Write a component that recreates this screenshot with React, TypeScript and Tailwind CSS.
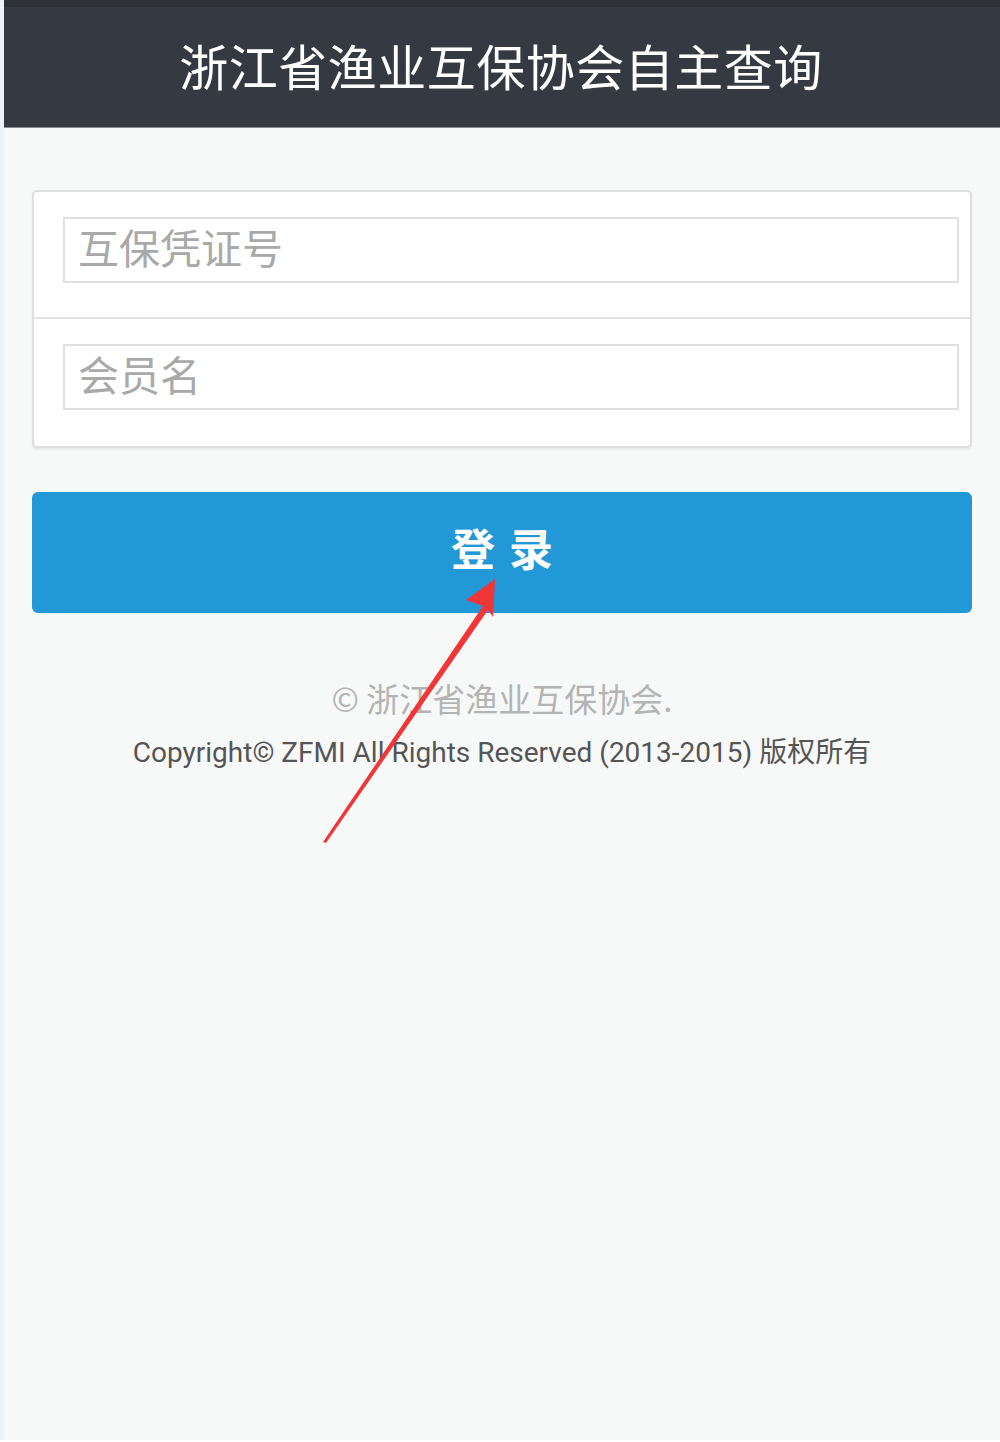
const cjk = { fontFamily: '"Noto Sans CJK SC", "Noto Sans", sans-serif' };
const latin = { fontFamily: 'Roboto, "Noto Sans CJK SC", sans-serif' };

const Field: React.FC<{ placeholder: string; last?: boolean }> = ({ placeholder, last }) => (
    <div className={`pl-[29px] pr-[11px] pt-[25px] ${last ? "pb-[36px]" : "pb-[34px] border-b-2 border-[#e3e3e3]"}`}>
        <input
            className="w-full h-[66px] border-2 border-[#e0e0e0] bg-white px-[13px] pb-[8px] text-[41px] text-[#333] placeholder:text-[#a9a9a9] outline-none"
            style={cjk}
            placeholder={placeholder}
        />
    </div>
);

export default function App() {
    return (
        <div className="flex w-[1000px] h-[1442px] bg-white">
            <div className="w-[4px] h-[1440px] bg-[#edf1f9]" />

            <div className="relative flex-1 h-[1440px] bg-[#f7f9f9]">
                <div className="h-[128px] bg-[#353a42] border-t-[7px] border-[#2e3135] border-b border-b-[#8a8d92] flex items-center justify-center">
                    <h1 className="text-white text-[49px] leading-none tracking-[0.5px] mb-[6px] ml-[-2px]" style={cjk}>
                        浙江省渔业互保协会自主查询
                    </h1>
                </div>

                <div className="px-[28px] pt-[62px]">
                    <div className="bg-white border-2 border-[#dedede] rounded-[5px] shadow-[0_2px_2px_rgba(0,0,0,0.06)]">
                        <Field placeholder="互保凭证号" />
                        <Field placeholder="会员名" last />
                    </div>

                    <button
                        className="mt-[44px] w-full h-[121px] bg-[#2298d6] rounded-[6px] text-white text-[44px] font-bold tracking-[14px] pl-[14px] pb-[12px]"
                        style={cjk}
                    >
                        登录
                    </button>
                </div>

                <div className="flex flex-col items-center mt-[66px]">
                    <p className="text-[33px] leading-[38px] text-[#b4b4b4]" style={cjk}>
                        © 浙江省渔业互保协会.
                    </p>
                    <p className="mt-[19px] text-[28px] leading-[34px] text-[#555]" style={latin}>
                        Copyright© ZFMI All Rights Reserved (2013-2015) 版权所有
                    </p>
                </div>

                {/* red annotation arrow */}
                <svg className="absolute left-0 top-0 pointer-events-none" width="996" height="900">
                    <polygon
                        points="319,842 479,606 462,600 491,579 489,617 484,610 322,843"
                        fill="#f03636"
                    />
                </svg>
            </div>
        </div>
    );
}
